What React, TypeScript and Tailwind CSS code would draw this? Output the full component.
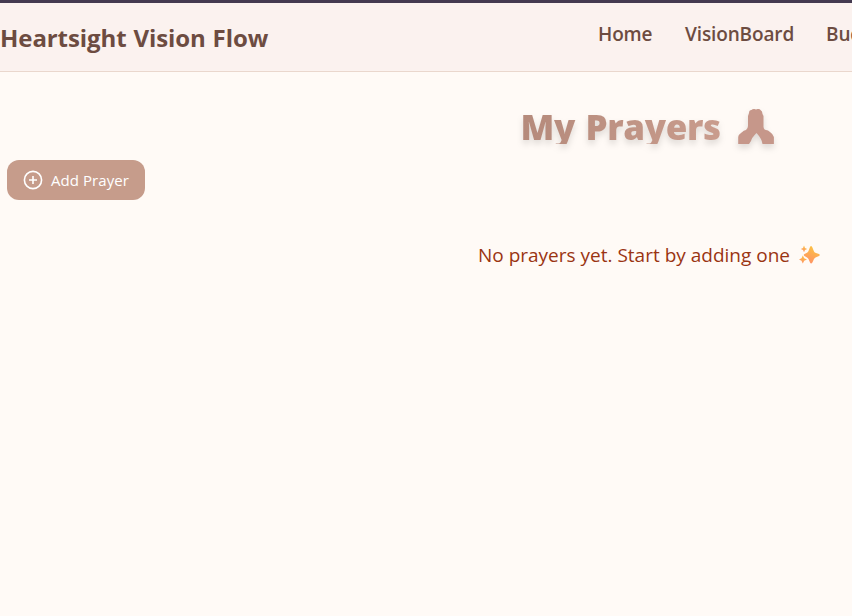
import React from "react";

const navItems = [
  { label: "Home", width: "w-[55px]" },
  { label: "VisionBoard", width: "w-[109px]" },
  { label: "Budget", width: "w-[64px]" },
];

function Header() {
  return (
    <header className="flex h-[72px] w-[1296px] border-t-[3px] border-b border-t-[#443a50] border-b-[#ead7cd] bg-[#fbf2ef] text-[#6d4c41]">
      <div className="w-[598px] shrink-0 pt-[17px] text-[24px] leading-[36px] font-bold tracking-[-0.08px] whitespace-nowrap [word-spacing:0.7px]">
        Heartsight Vision Flow
      </div>
      <nav className="flex gap-8 pt-[17px] text-[19px] leading-7 font-semibold tracking-[-0.13px]">
        {navItems.map((item) => (
          <a key={item.label} className={`${item.width} shrink-0 whitespace-nowrap`}>
            {item.label}
          </a>
        ))}
      </nav>
    </header>
  );
}

function PrayingHands() {
  return (
    <svg width="37" height="36" viewBox="0 0 37 36" className="ml-[17px] shrink-0">
      <path
        d="M12 5Q12 2 14.500 2Q15.500 .7 17.500 1L19 1.500L20.500 1Q23 .7 23.500 2Q25.500 3 25.500 6L26.500 8V19Q27 22 29 22Q31 22 33 24Q36 26 36.900 29V36H25.500Q25 31 19.500 25Q14.500 30 14 33L12 36H1.200V29Q1 27 4 25Q7 22 9 22Q11 20 11 18V8Z"
        fill="#c6978a"
      />
    </svg>
  );
}

function Sparkles() {
  return (
    <svg width="22" height="20" viewBox="0 0 22 20" className="ml-[9px] shrink-0">
      <defs>
        <linearGradient id="spark" x1="0.7" y1="0" x2="0.3" y2="1">
          <stop offset="0" stopColor="#fbc441" />
          <stop offset="1" stopColor="#ff9167" />
        </linearGradient>
      </defs>
      <g fill="url(#spark)">
        <path d="M12 1Q13 1 13.4 2.5L15 6.5Q15.500 7.500 17 8L20 9Q21.500 10 20 11L16.500 12.500Q15.500 13 15 14L13.400 17.500Q12 19.500 11 17.500L9.500 14Q9 13 8 12.500L5.500 11Q4 10 5.500 9L8 7.800Q9 7.300 9.500 6L10.800 2.500Q11.200 1 12 1Z" />
        <path d="M5 0.500L6 3L8.200 4L6 5L5 7.200L4 5L1.800 4L4 3Z" />
        <path d="M3.800 10.500L5.200 13.300L8 14.500L5.200 15.700L3.800 18.500L2.500 15.700L0 14.500L2.500 13.300Z" />
      </g>
    </svg>
  );
}

export default function App() {
  return (
    <div className="h-[616px] w-full overflow-hidden bg-[#fffaf6] font-['Open_Sans','Noto_Sans',sans-serif]">
      <Header />
      <main className="w-[1296px]">
        <h1 className="mt-9 flex h-9 items-start justify-center pr-[2px] text-[35px] leading-[37px] font-extrabold whitespace-nowrap drop-shadow-[0_4px_3px_rgba(0,0,0,0.13)]">
          <span className="block h-9 w-[199px] bg-gradient-to-r from-[#b58a7b] to-[#c99c8d] bg-clip-text tracking-[-0.4px] text-transparent [word-spacing:2px]">
            My Prayers
          </span>
          <PrayingHands />
        </h1>
        <button className="mt-4 ml-[7px] flex h-10 w-[138px] items-center rounded-xl bg-[#c69c8b] pl-4 text-[15px] tracking-[0.07px] whitespace-nowrap text-white">
          <svg width="20" height="20" viewBox="0 0 20 20" fill="none" stroke="currentColor" strokeWidth="1.6" className="mr-2 shrink-0">
            <circle cx="10" cy="10" r="8.6" />
            <path d="M10 6v8M6 10h8" />
          </svg>
          Add Prayer
        </button>
        <p className="mt-[39px] flex h-8 items-center justify-center pl-[3px] text-[19px] whitespace-nowrap text-[#9a3412]">
          No prayers yet. Start by adding one
          <Sparkles />
        </p>
      </main>
    </div>
  );
}
